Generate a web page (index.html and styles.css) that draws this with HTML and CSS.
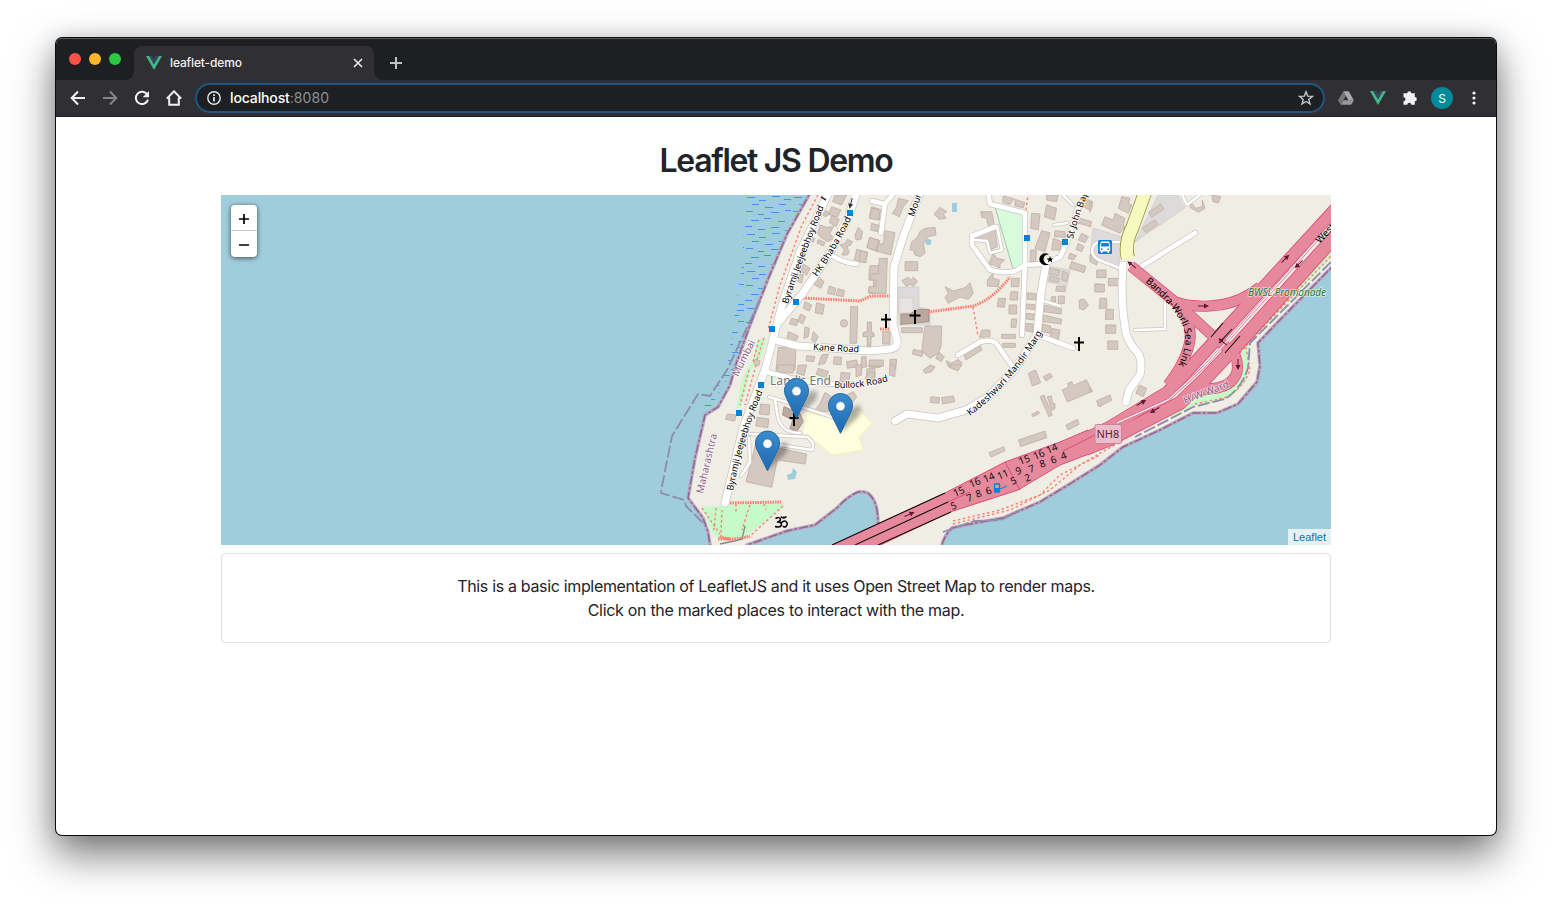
FILE: index.html
```html
<!DOCTYPE html>
<html lang="en">
<head>
<meta charset="utf-8">
<title>leaflet-demo</title>
<link rel="stylesheet" href="styles.css">
</head>
<body>
<div class="window">
  <div class="tabstrip">
    <div class="lights"><i class="red"></i><i class="amber"></i><i class="green"></i></div>
    <div class="tab">
      <svg class="vue" width="16" height="14" viewBox="0 0 16 14"><path fill="#41b883" d="M0 0h3.2L8 8.3 12.8 0H16L8 14z"/><path fill="#35495e" d="M3.2 0h3L8 3.1 9.8 0h3L8 8.3z"/></svg>
      <span class="tab-title">leaflet-demo</span>
      <svg class="close" width="10" height="10" viewBox="0 0 10 10"><path d="M1 1l8 8M9 1l-8 8" stroke="#e8eaed" stroke-width="1.6"/></svg>
    </div>
    <svg class="plus" width="12" height="12" viewBox="0 0 12 12"><path d="M6 0v12M0 6h12" stroke="#bdc1c6" stroke-width="2"/></svg>
  </div>
  <div class="toolbar">
    <div class="nav">
      <svg width="16" height="16" viewBox="0 0 16 16"><path d="M15 8H2M8 1.5L1.7 8 8 14.500" class="ic"/></svg>
      <svg width="16" height="16" viewBox="0 0 16 16"><path d="M1 8h13M8 1.500L14.300 8 8 14.500" class="ic dim"/></svg>
      <svg width="16" height="16" viewBox="0 0 16 16"><path d="M13.300 4.600A6.200 6.200 0 1 0 14 9.600" class="ic"/><path d="M15 1v6.300H8.700z" fill="#f1f1f3"/></svg>
      <svg width="16" height="16" viewBox="0 0 16 16"><path d="M.8 8.600L8 1.300l7.200 7.300M3.200 7.500v7.300h9.600V7.500" class="ic"/></svg>
    </div>
    <div class="omnibox">
      <svg width="14" height="14" viewBox="0 0 14 14"><circle cx="7" cy="7" r="6.200" fill="none" stroke="#e8eaed" stroke-width="1.4"/><path d="M7 6v4.500M7 3.200v1.700" stroke="#e8eaed" stroke-width="1.700"/></svg>
      <span class="url">localhost<em>:8080</em></span>
      <svg class="star" width="16" height="16" viewBox="0 0 16 16"><path d="M8 1.800l1.700 4.300 4.700.3-3.600 3 1.200 4.600L8 11.500 4 14l1.200-4.600-3.600-3 4.700-.3z" fill="none" stroke="#c4c7cb" stroke-width="1.400"/></svg>
    </div>
    <div class="ext">
      <svg width="16" height="16" viewBox="0 0 16 16"><path fill="#777" d="M5.300 1.200L0 10.200l2.700 4.600L8 5.700z"/><path fill="#aaa" d="M5.300 1.200h5.400l5.200 9h-5.400z"/><path fill="#999" d="M5.500 10.200h10.400l-2.700 4.600H2.700z"/></svg>
      <svg width="16" height="14" viewBox="0 0 16 14"><path fill="#41b883" d="M0 0h3.200L8 8.300 12.800 0H16L8 14z"/><path fill="#35495e" d="M3.200 0h3L8 3.100 9.800 0h3L8 8.300z"/></svg>
      <svg width="16" height="16" viewBox="0 0 16 16"><path fill="#f1f1f3" d="M5.300 3.300a2 2 0 0 1 4 0h3.500v3.800a2.050 2.050 0 0 1 0 4.100v3.600H9.300a2 2 0 0 0-4 0H1.500v-3.600a2 2 0 0 0 0-4V3.300z"/></svg>
      <span class="avatar">S</span>
      <svg width="4" height="14" viewBox="0 0 4 14"><g fill="#f1f1f3"><circle cx="2" cy="2" r="1.600"/><circle cx="2" cy="7" r="1.600"/><circle cx="2" cy="12" r="1.600"/></g></svg>
    </div>
  </div>
  <main class="page">
    <h1>Leaflet JS Demo</h1>
    <div class="map">
      <svg class="tiles" width="1110" height="350" viewBox="221 195 1110 350">
        <defs>
          <pattern id="reef" width="47" height="37" patternUnits="userSpaceOnUse" patternTransform="translate(745 196)">
            <path stroke="#3d94f6" stroke-width="1" d="M2 1.500h8M14 4.500h7M27 .500h8M39 3.500h7M7 8.500h7M20 11.500h8M34 8.500h7M1 15.500h7M13 18.500h6M26 16.500h8M40 14.500h6M6 24.500h8M19 22.500h7M33 25.500h7M0 30.500h7M13 33.500h7M26 31.500h8M40 34.500h6"/>
          </pattern>
          <linearGradient id="pin" x2="0" y2="1"><stop stop-color="#3a8ccd"/><stop offset="1" stop-color="#1f69b0"/></linearGradient>
          <filter id="soft" x="-20%" y="-20%" width="140%" height="140%"><feGaussianBlur stdDeviation="2"/></filter>
          <path id="land" d="M814 185L809 195 787 234 768 279 750 325 735 367 730 385 718 407 705 415 695 458 688 498 703 518 708 532 710 545V560H740L747 545 787 531 815 525 837 508Q848 496 858 492 866 491 870 495 878 503 878 523L880 545V560H938L942 545Q944 536 952 528L970 524 1003 518 1040 502 1073 482 1100 465 1123 447 1160 430 1193 413 1217 413 1238 404 1257 382 1260 366 1258 343 1277 323 1331 268 1345 254V185z"/>
          <g id="wide">
            <path d="M830 190L800 252 782 305 765 370 743 428 725 503"/>
            <path d="M858 190L847 220 830 253 803 293 779 322"/>
            <path d="M921 190L903 237 894 267 893 325 897 340Q898 348 890 349L870 351 830 348 798 346 779 341"/>
            <path d="M1046 264L1041 293 1037 335 1015 369 988 397 966 410 938 418 907 414 895 421"/>
            <path d="M1123 265Q1120 300 1126 333 1129 344 1138 353 1143 362 1140 375L1129 390 1126 402"/>
          </g>
          <g id="mid">
            <path d="M872 201L885 204 894 193M885 204L881 233"/>
            <path d="M988 190L990 204 1025 213V263L1022 335"/>
            <path d="M995 227L972 236 972 245 990 270Q1005 274 1015 271L1025 265 1043 264 1060 257 1067 243 1077 210 1090 190"/>
            <path d="M1037 335L1073 348M958 355L980 342Q991 339 996 343L1012 366"/>
            <path d="M830 253Q838 262 857 264M767 372L790 378 815 383 835 384M1142 266L1195 233"/>
          </g>
          <g id="thin">
            <path d="M769 397L793 404 832 417 837 420M974 240L987 241 990 253 1002 250 997 226M1041 300L1060 306M1054 225L1067 223M1063 195L1073 205"/>
            <path d="M1165 300V329L1135 330M1122 242H1100Q1093 243 1092 250 1092 256 1099 260L1122 269M1180 190L1187 205 1200 195"/>
            <path d="M775 400L778 418Q782 433 800 433M750 434L807 437Q816 443 812 450L780 445M749 438L750 462 741 476"/>
          </g>
          <g id="trunk">
            <path d="M1131 266L1179 305 1215 338 1232 352Q1239 358 1237 372 1232 388 1208 389L1185 394"/>
            <path d="M1176 302Q1190 307 1210 306 1232 305 1250 294L1260 287"/>
            <path d="M1176 302Q1192 320 1190 340 1187 360 1168 385"/>
          </g>
          <path id="upper" d="M1085 439L1110 427 1168 392 1223 332 1262 289 1340 204"/>
          <path id="lower" d="M1085 449L1110 439 1180 403 1205 379 1240 342 1340 231"/>
          <path id="arrow" d="M-5-.5H1V-2.500L6 0 1 2.500V.5H-5z"/>
          <path id="t1" d="M788 304Q801 263 828 197"/><path id="t2" d="M817 277Q838 248 854 212"/>
          <path id="t3" d="M813 350L863 352.500"/><path id="t4" d="M834 387.500Q858 390 892 380"/>
          <path id="t5" d="M733 491Q742 440 766 384"/><path id="t6" d="M703 494L719 426"/><path id="t7" d="M738 377L760 333"/>
          <path id="t8" d="M914 217L928 175"/><path id="t9" d="M970 416Q1015 382 1048 323"/><path id="t10" d="M1073 239Q1077 220 1093 180"/>
          <path id="t11" d="M1145 282Q1177 308 1184 330 1189 346 1176 369"/><path id="t12" d="M1185 404L1235 385"/><path id="t13" d="M1320 244L1350 211"/>
        </defs>
        <path fill="#a0cddb" d="M221 195h1110v350H221z"/>
        <path fill="url(#reef)" d="M746 195H810L732 372 707 412 703 408 727 370 733 325 742 265z"/>
        <use href="#land" class="land"/>
        <use href="#land" class="coast"/><use href="#land" class="coast-dash"/>
        <path class="border" d="M760 300L727 370 710 396 698 394 672 436 662 486 661 493 684 500 686 506 705 525M943 532L974 521 1001 520 1020 510"/>

        <path class="grass" d="M702 507L785 502 783 508 743 538 720 540 712 532zM757 340L767 338 762 356 751 370 741 407 736 409 742 379 753 360z"/>
        <path class="grass" d="M1331 240L1240 340 1244 362Q1242 380 1228 388L1203 394 1165 409 1171 418 1193 406 1226 400Q1242 390 1247 378L1249 343 1331 258z"/>
        <path fill="#d8fadd" stroke="#9bcba0" d="M995 207L1025 213 1024 264 1013 269z"/>
        <g class="grey">
          <path d="M898 287h21v20l11 3v15h-31zM1158 195h20l7 13-50 34zM1093 228l30 9-5 33-28-12zM1048 266l22 4-3 16-20-4z"/>
          <path fill="#e8e2e2" d="M899 298h14v15h-14z"/>
        </g>
        <path class="yellow" d="M807 413L833 418 850 415 858 409 872 423 859 437 863 450 832 455 820 445 803 432z"/>
        <g fill="#a0cddb"><path d="M952 203h5v9h-5zM793 468l4 4-2 7-7 1-1-5 5-2z"/><circle cx="928.300" cy="242" r="3"/></g>

        <g class="bld">
          <g transform="translate(640 190) scale(.33333)"><path d="M585 15H620L605 45 578 35zM575 50l28 10-11 22-27-10zM545 72l15-10 10 10-14 8zM575 78l23 10-10 22-20-12zM540 105l20 7 20-2-10 20 10 15-18 10-22-15-7-10zM510 142l15 3-5 12-12-5zM535 148l20 10-5 10-19-9zM695 50l25 8v32l-32-8zM655 112l13 13-5 23-15 2-3-15zM700 102l16 4-4 16-18-4zM690 142l30 10-8 33-32-13zM650 178l33 9-6 31-34-8zM600 165l15-5 7-12 16 7-6 10-12 5 8 15-6 10h-17l8-15zM490 222l20 13-10 20-17-10zM470 250l20 5-5 25-20-10zM530 255l22 20-9 20-19-10zM568 288l20 7-5 20-21-5zM595 296l19 6-4 18-22-4zM530 338l23 7-5 28-23-5zM495 335l20 10-7 18-18-8zM482 372l15 8-9 22-15-10zM455 385l20 5-5 17-22-5zM445 425l30 13-5 12-30 2zM495 410l13 5-3 25-13 5zM520 425l15 15-10 18-10-8zM632 350h21l-3 110h-20zM682 397h13l-2 28 9 5v10h-10v30h-10v-30h-13l1-12 13-3zM690 227h30v83h-33v-20h13v-20h-13v-20zM415 472h53l-3 68h-57zM500 497l25 3-5 15-22-3zM545 495l20-3-10 28-20 5zM583 500l22 2-2 23-23-3zM620 515l30-5 5 20-33 5zM665 500h13l2 30-18 5zM690 515h28v17h-28zM345 508l16 5-5 15-14-5z"/><circle cx="612" cy="400" r="11"/></g>
          <g transform="translate(640 365) scale(.33333)"><path d="M415 0h50l-7 25-48-5zM475 0h25l-8 32-22-7zM535 10l30 10-7 18-30-10zM603 22l28 3-6 30-25-5zM648 0h17v30l-17 5zM680 12l25-2v28l-25-3zM362 117l28 3-3 30-29-3zM352 157l35 5-4 26-36-5zM262 147l26 3-4 18-27-5zM555 82l20 13 25 5 40-20 10 15-10 15-80 30-35-5 15-20zM350 225l62 10 6 15 82 17-5 30-83-12-17 82-77-17z"/><path class="dark" d="M432 125l48 20 10 25-20 30-20-10 8-25-30-15z"/></g>
          <g transform="translate(860 190) scale(.33333)"><path d="M35 55l27 5-7 30-27-5zM115 25l30 7-15 18-12 30-21-10 13-20zM240 52l20 13-10 7 8 13-20 3-16-16zM35 100l22 8-5 17-20-5zM75 122l30 6-13 67-44-12 4-18 18-5zM28 143l27 7-5 32-28-10zM0 183l22 5-5 30-17-3zM58 205h24l-4 107-53-4 3-18h20v-20H30l5-18h20zM135 215h38v27h-38zM195 115l30-3 3 23-23 5-15 20 5 30-15 10-15-5-5-15h-10l5-25 15-10 10-20zM125 272l20-10 7 8 8-8 13 12-13 16-10-8-10 8zM255 290l25 13 35-10 15-15 10 32-15 18-25-7-35 19-10-18 10-12zM125 413h62v15h-62zM195 408h50l-2 62-8 20-25 15-25-20 5-45zM160 478l30 7-5 15-28-8zM237 487l16 13-10 15-16-10zM258 512l17 8 20-12 12 12-22 20-20-10zM310 490l50-24 6 14-48 30zM365 420h25v20l-32 2zM425 433h41v12h-41zM428 460h38v12h-38zM400 248l-2 17 20 5-3 20-33-2v-18zM455 265h23l-2 25h-23zM453 305h20v25h-23zM415 325h22l-4 27-21-2zM447 345h23v27h-23zM455 387h15l-2 25h-15zM68 425h22v37H68zM22 397h12l-1 28 7 5v10h-7l-1 28H22v-28l-12-2v-10l12-3zM28 510h42v18H28zM90 508h20l-3 32H90zM362 65h33l8 40-18 5-5-25-15-3zM345 140l60-20 7 50-20 10-12-30-30 2zM400 190l10 15 24 5-14 12v13l-20-10-15-3zM430 18l32 8-12 18-22-7zM465 28l30 10-5 15-25-5zM515 70l25 2-5 48-23-5zM545 122l25 6-15 57-30-10 5-15zM560 45l30 10-7 35-30-10zM560 15h35l-5 20-30-5zM585 122l30 3 2 17-34-2zM580 145l25 10-5 25h-25zM512 180h18l-3 35h-17zM675 25l23 10-8 25-22-10zM645 80l50 15-3 15-42-12zM665 130l20 10-10 18-20-8zM655 160l17 10-7 15-17-7zM630 190l20 7-10 13-15-5zM635 215l43 15-6 18-44-13zM690 195l25 10-5 20-20-10zM570 235l30 5-5 18-30-8zM608 243l18 8-6 24-15-5zM570 257l28 8-3 12-28-5zM590 288l28 2-3 15-28-2zM595 318h18v22h-18zM575 320h12v15h-14zM555 345l50 13-2 14-53-7zM550 375l55 13-2 14-55-7zM575 415l25 5-5 30-25-5zM548 402l24 6-2 22-24-5zM503 308l27 4-3 18-25-2zM500 342l25 2-2 15-24-3zM500 370l23 2-2 18-23-3zM497 400l23 2-2 25-21-5zM658 330l14-3 13 18-13 15-14-5zM705 282h15v23h-15z"/><path class="dark" d="M123 372h27l25-14h32v37l-84 8z"/></g>
          <g transform="translate(1090 190) scale(.33333)"><path d="M95 20l25 5-5 15 10 5-10 25-30-15zM75 70l30 15-5 20 5 5-15 20-55-25 10-25 25 10zM212 42l10 15-37 25-9-15zM195 90l8 13-35 25-10-14zM20 240h28v23H20zM55 265h32v22H55zM15 283h28v23H15zM30 325h20v30H28zM48 358h22v30H46zM47 405h30v25H47zM53 453h30v25H53zM0 35l8 10-8 22zM305 40l12 15 20-5V30l8 25-20 12-25-15z"/><path d="M365 15l5 20 15 3 8-18z"/></g>
          <g transform="translate(860 365) scale(.33333)"><path d="M28 20l17 5-5 20-25-5zM90 0h15v35l-17-5zM25 0h40v5H25zM190 15l20-15 15 5-10 15-20 5zM265 0h40l-12 18zM213 95l26 3-2 17-26-3zM245 98l35-5 4 17-36 7zM505 25l22-10 15 38-25 10zM550 35l20-10 8 10-20 13zM607 75l18-8-2-12 13-5 3 12 40-18 18 35-75 32zM540 95l12-5 25 60-10 5zM562 95l12-2 3 20 8 3v15l-10 5zM515 148l20-10 4 7-20 10zM618 180l35-17 4 15-33 17zM475 225l80-27 5 20-78 27zM387 263l44-18 4 12-42 19zM712 110l10 0v15l-8-3z"/></g>
          <g transform="translate(1090 365) scale(.33333)"><path d="M20 107l40-17 5 16-38 19zM148 60l22 10-10 25-22-10zM0 68l6 8-6 8z"/></g>
        </g>

        <g class="foot">
          <path class="steps" d="M803 298L860 301 871 296H892M928 312L973 306Q992 300 1010 277M880 329h12"/>
          <path class="steps" d="M730 503L781 502M720 536Q730 542 750 536M718 539h12"/>
          <path d="M818 195L802 225 780 285 768 330M973 307L978 336M1026 210L1028 195M702 508L720 534M716 508L714 530M722 510L721 534M750 505L742 530M783 506L750 536M736 504v10M764 504l2 6M759 340L753 362M764 338L757 360M749 370L740 405M756 365L745 405"/>
          <path d="M953 521L1000 510 1040 495 1060 475 1100 455M953 524L1010 510 1050 490 1080 465 1135 433M1236 347L1331 243M1240 353L1331 250M1246 345L1331 256M1255 330l10-8M1246 347L1250 370Q1245 385 1228 397L1195 404"/>
        </g>
        <path d="M720 544l14-3 8-2 3-13" fill="none" stroke="#888" stroke-width="1.400"/>
        <path class="border" d="M1331 262L1250 343 1248 368Q1242 388 1225 399L1193 407 1135 437"/>

        <use href="#thin" class="thin-case"/><use href="#mid" class="mid-case"/><use href="#wide" class="wide-case"/>
        <use href="#thin" class="thin-fill"/><use href="#mid" class="mid-fill"/><use href="#wide" class="wide-fill"/>
        <use href="#trunk" class="trunk-case"/><use href="#lower" class="lower-case"/><use href="#upper" class="upper-case"/>
        <path class="span" d="M826 548L860 532 945 493 1005 462 1060 442 1088 430 1094 452 1060 465 1018 490 950 512 872 549z"/>
        <use href="#trunk" class="trunk-fill"/><use href="#lower" class="lower-fill"/><use href="#upper" class="upper-fill"/>
        <path d="M1117 423L1168 400 1205 366 1331 224" fill="none" stroke="#dc4b78" stroke-width="2.600"/>
        <path d="M1117 423L1168 400 1205 366 1331 224" fill="none" stroke="#f8eef0" stroke-width="1.600"/>
        <path d="M832 545L945 493M855 545L948 502M878 545L951 512M1211 337L1223 323M1219 343L1232 329M1225 353L1240 336" fill="none" stroke="#111" stroke-width="1.100"/>
        <path d="M1005 462L1020 490M948 502L970 492M1063 451L1095 435" fill="none" stroke="#dc4b78"/>
        <path class="yroad-case" d="M1147 187L1133 226Q1124 244 1128 258"/><path class="yroad" d="M1147 187L1133 226Q1124 244 1128 259"/>
        <g class="arrows">
          <use href="#arrow" transform="translate(909 514.500) rotate(-24)"/>
          <use href="#arrow" transform="translate(1141 403) rotate(-30)"/>
          <use href="#arrow" transform="translate(1155 410) rotate(150)"/>
          <use href="#arrow" transform="translate(1203 306)"/>
          <use href="#arrow" transform="translate(1285 259) rotate(-45)"/>
          <use href="#arrow" transform="translate(1299 264) rotate(135)"/>
          <use href="#arrow" transform="translate(1132 265) rotate(220)"/>
          <use href="#arrow" transform="translate(1223 342) rotate(220)"/>
          <use href="#arrow" transform="translate(1238 364) rotate(90)"/>
          <use href="#arrow" transform="translate(851 203) rotate(105)" fill="#333"/>
          <path d="M821 197l5 3" stroke="#333" stroke-width="1.500"/>
        </g>
        <path fill="#0084da" d="M847 210h6v6h-6zM793 299h6v6h-6zM769 326h6v6h-6zM758 382h6v6h-6zM736 410h6v6h-6zM1024 235h6v6h-6zM1062 239h6v6h-6z"/>
        <g><rect x="1098" y="240" width="14" height="14" rx="1.500" fill="#0084da"/><path fill="#fff" d="M1101 241.500h8l1.200 4v6h-1.200v1.500h-1.500v-1.500h-5v1.500h-1.500v-1.500h-1.200v-6z"/><path fill="#0084da" d="M1101.500 243h7l.8 3.500h-8.600zM1101 248.500h1.500v1.500h-1.500zM1107.500 248.500h1.500v1.500h-1.500z"/></g>
        <path d="M1000 489l7-3" stroke="#0084da"/><path d="M994.500 484h5v8h-5z" fill="#e892a2" stroke="#0084da" stroke-width="1.300"/><path d="M994 488h6v4h-6z" fill="#0084da"/>
        <g fill="none" stroke="#000" stroke-width="2">
          <path d="M886 314v14M881 319.500h10M915 310v14M909.500 315.500h11M1079 337v14M1074 342.500h10M794 413v13M789.500 418h9"/>
          <path d="M775.500 518.500q4-2 5 .5 0 2.500-3 3 4-.3 4 3-1 3-6.500 1.500M781 523q3-3 5-1.500 2.500 2 0 5-2 1-3-.5M781 516.500q2.500 3 5.500 0" stroke-width="1.500"/>
        </g>
        <path d="M1049 254.500a6 6 0 1 0 0 9.500 4.800 4.800 0 1 1 0-9.500zM1050 256l1 2.500h2.500l-2 1.500.8 2.500-2.300-1.500-2.200 1.500.8-2.500-2-1.500h2.500z"/><circle cx="784" cy="517" r=".8"/>

        <g class="road-name">
          <text textLength="104"><textPath href="#t1">Byramji Jeejeebhoy Road</textPath></text>
          <text textLength="68"><textPath href="#t2">HK Bhaba Road</textPath></text>
          <text textLength="46"><textPath href="#t3">Kane Road</textPath></text>
          <text textLength="55"><textPath href="#t4">Bullock Road</textPath></text>
          <text textLength="104"><textPath href="#t5">Byramji Jeejeebhoy Road</textPath></text>
          <text><textPath href="#t8">Mount</textPath></text>
          <text textLength="111"><textPath href="#t9">Kadeshwari Mandir Marg</textPath></text>
          <text><textPath href="#t10">St John Bap</textPath></text>
          <text class="plain" textLength="99"><textPath href="#t11">Bandra-Worli Sea Link</textPath></text>
          <text class="plain"><textPath href="#t13">West</textPath></text>
        </g>
        <g class="admin">
          <text textLength="61"><textPath href="#t6">Maharashtra</textPath></text>
          <text><textPath href="#t7">Mumbai</textPath></text>
          <text><textPath href="#t12">H/W Ward</textPath></text>
        </g>
        <text class="place" x="770" y="385" textLength="61">Land's End</text>
        <text class="promenade" x="1248" y="295.500" textLength="78">BWSL Promonade</text>
        <g class="gates">
          <text transform="translate(955 497) rotate(-24)">15</text><text transform="translate(971 488) rotate(-24)">16</text><text transform="translate(985 483) rotate(-24)">14</text><text transform="translate(999 480) rotate(-24)">11</text>
          <text transform="translate(952 510) rotate(-20)">5</text><text transform="translate(968 502) rotate(-20)">7</text><text transform="translate(977 498) rotate(-20)">8</text><text transform="translate(987 495) rotate(-20)">6</text>
          <text transform="translate(1020 465) rotate(-20)">15</text><text transform="translate(1035 460) rotate(-24)">16</text><text transform="translate(1048 454) rotate(-24)">14</text>
          <text transform="translate(1017 475) rotate(-20)">9</text><text transform="translate(1030 473) rotate(-20)">7</text><text transform="translate(1041 468) rotate(-20)">8</text><text transform="translate(1052 464) rotate(-20)">6</text><text transform="translate(1062 460) rotate(-20)">4</text>
          <text transform="translate(1012 485) rotate(-20)">5</text><text transform="translate(1026 482) rotate(-20)">2</text>
        </g>
        <rect x="1095" y="424.500" width="26.500" height="19" rx="1.500" fill="#eabfcb" stroke="#cf8096"/>
        <text class="shield" x="1096.500" y="438">NH8</text>

        <g opacity=".3" filter="url(#soft)"><path d="M797 418l4-18 12-10q7 2 2 11zM841 433l4-18 12-10q7 2 2 11zM768 470l4-18 12-10q7 2 2 11z"/></g>
        <g id="marker" transform="translate(784 378)">
          <path fill="url(#pin)" stroke="#2468a5" d="M12.500.6C5.800.6.5 6 .5 12.500c0 3 1 5.500 2.200 8L12.500 40.300l9.800-19.800c1.200-2.500 2.200-5 2.200-8C24.500 6 19.200.6 12.500.6z"/><circle cx="12.500" cy="13.200" r="4.600" fill="#fff" stroke="#2a6eac" stroke-width=".6"/>
        </g>
        <use href="#marker" x="44" y="15"/><use href="#marker" x="-29" y="52.500"/>
      </svg>
      <div class="zoom"><button aria-label="Zoom in"><svg width="12" height="12" viewBox="0 0 12 12"><path d="M6 1v10M1 6h10" stroke="#000" stroke-width="1.700"/></svg></button><button aria-label="Zoom out"><svg width="12" height="12" viewBox="0 0 12 12"><path d="M1 6h10" stroke="#000" stroke-width="1.700"/></svg></button></div>
      <a class="credit">Leaflet</a>
    </div>
    <div class="card"><p><span class="line-a">This is a basic implementation of LeafletJS and it uses Open Street Map to render maps.</span><br><span class="line-b">Click on the marked places to interact with the map.</span></p></div>
  </main>
</div>
</body>
</html>
```
FILE: styles.css
```css
* { box-sizing: border-box; }
body { margin: 0; height: 909px; overflow: hidden; background: #fff; font-family: Inter, "Liberation Sans", sans-serif; color: #212529; display: flex; padding: 38px 0 0 56px; }
.window { width: 1440px; height: 797px; border-radius: 6px; overflow: hidden; background: #fff; box-shadow: 0 0 0 1px #0c0c0e, 0 18px 40px 2px rgba(0,0,0,.52), 0 0 20px rgba(0,0,0,.12); }
.tabstrip { height: 42px; background: #1e1f23; display: flex; border-top: 1px solid #55565a; }
.lights { display: flex; gap: 8px; padding: 14px 13px 0; width: 78px; }
.lights i { width: 12px; height: 12px; flex: none; border-radius: 50%; }
.red { background: #ff5148; }
.amber { background: #fdb628; }
.green { background: #26c940; }
.tab { position: relative; width: 240px; height: 34px; margin-top: 7px; border-radius: 8px 8px 0 0; background: #302f34; display: flex; align-items: center; padding: 0 11px 0 12px; font-size: 12px; font-weight: 500; color: #f1f1f3; }
.tab::before, .tab::after { content: ""; position: absolute; bottom: 0; width: 8px; height: 8px; }
.tab::before { left: -8px; background: radial-gradient(circle at 0 0, #1e1f23 7.5px, #302f34 8px); }
.tab::after { right: -8px; background: radial-gradient(circle at 100% 0, #1e1f23 7.5px, #302f34 8px); }
.tab-title { margin-left: 8px; padding-bottom: 2px; letter-spacing: -.13px; flex: 1; }
.plus { margin: 18px 0 0 16px; }
.toolbar { height: 37px; background: #302f34; border-bottom: 1px solid #202024; display: flex; align-items: center; }
.nav { display: flex; gap: 16px; padding-left: 14px; width: 139px; }
.ic { fill: none; stroke: #f1f1f3; stroke-width: 2; }
.dim { stroke: #85858a; }
.omnibox { width: 1130px; height: 30px; border: 2px solid #205781; border-radius: 15px; background: #1e1f23; display: flex; align-items: center; padding: 0 9px 0 10px; }
.url { margin-left: 9px; padding-bottom: 1px; font-size: 14px; font-weight: 500; color: #fff; letter-spacing: -.13px; flex: 1; }
.url em { font-style: normal; font-weight: 400; color: #8d9094; letter-spacing: .1px; }
.ext { display: flex; align-items: center; padding-left: 13px; gap: 16px; }
.ext .avatar { width: 22px; height: 22px; margin: 0 -3px; border-radius: 50%; background: #028a9b; color: #fff; font-size: 12px; display: grid; place-items: center; }
.ext svg:last-child { margin-left: 6px; }
.page { width: 1110px; margin: 0 auto; padding-top: 25px; text-align: center; }
h1 { margin: 0 0 15px; font-size: 32px; line-height: 38px; font-weight: 600; letter-spacing: -1.3px; }
.map { position: relative; height: 350px; overflow: hidden; }
.tiles { display: block; }
.tiles path { stroke-linejoin: round; }
.land { fill: #f0ede5; }
.coast { fill: none; stroke: #b9a6bf; stroke-width: 3.5; }
.coast-dash { fill: none; stroke: #8d6690; stroke-width: 1.4; stroke-dasharray: 9 2 3 2; }
.border { fill: none; stroke: #8f8bae; stroke-width: 1.8; stroke-dasharray: 12 3; }
.grass { fill: #c6fac9; }
.grey { fill: #dcdadb; stroke: #cfc9c6; stroke-width: .6; }
.yellow { fill: #ffffe0; stroke: #f7f5b4; }
.bld path, .bld circle { fill: #d4c9c0; stroke: #c2b1a4; stroke-width: 2.6; }
.bld .dark { fill: #baa99c; stroke: #a18d7f; }
.foot path { fill: none; stroke: #fa8072; stroke-width: 1.4; stroke-dasharray: 2.5 2.5; }
.foot .steps { stroke-width: 3; stroke-dasharray: 1.6 .9; }
.thin-case, .mid-case, .wide-case { fill: none; stroke: #c9c5c0; stroke-linecap: round; }
.thin-case { stroke-width: 4; }
.mid-case { stroke-width: 6; }
.wide-case { stroke-width: 8.6; }
.thin-fill, .mid-fill, .wide-fill { fill: none; stroke: #fff; stroke-linecap: round; }
.thin-fill { stroke-width: 2.6; }
.mid-fill { stroke-width: 4.6; }
.wide-fill { stroke-width: 7.2; }
.trunk-case { fill: none; stroke: #dc4b78; stroke-width: 11; }
.trunk-fill { fill: none; stroke: #e6899c; stroke-width: 9.6; }
.span { fill: #e6899c; stroke: #dc4b78; }
.lower-case { fill: none; stroke: #dc4b78; stroke-width: 14; }
.upper-case { fill: none; stroke: #dc4b78; stroke-width: 13; }
.lower-fill { fill: none; stroke: #e6899c; stroke-width: 12.4; }
.upper-fill { fill: none; stroke: #e6899c; stroke-width: 11.4; }
.yroad-case { fill: none; stroke: #8f963c; stroke-width: 14; }
.yroad { fill: none; stroke: #f7fabf; stroke-width: 12.4; }
.arrows { fill: #601535; }
.tiles text { font-family: "Noto Sans", "Open Sans", sans-serif; }
.road-name { font-size: 9.2px; fill: #000; stroke: #fff; stroke-width: 1.4px; }
.road-name text { paint-order: stroke; }
.road-name .plain { stroke: none; font-size: 9.8px; }
.admin { font-size: 10px; fill: #8d618b; stroke: rgba(255,255,255,.65); stroke-width: 1.5px; }
.admin text { paint-order: stroke; }
.place { font-size: 12px; fill: #777; paint-order: stroke; stroke: rgba(255,255,255,.6); stroke-width: 2px; }
.promenade { font-size: 10px; font-style: italic; fill: #267d2c; paint-order: stroke; stroke: rgba(255,255,255,.6); stroke-width: 1.5px; }
.gates { font-size: 10px; fill: #111; }
.shield { font-size: 11px; fill: #60203d; }
.zoom { position: absolute; left: 10px; top: 10px; width: 26px; border-radius: 4px; background: #fff; box-shadow: 0 1px 5px rgba(0,0,0,.65); }
.zoom button { display: grid; place-items: center; width: 26px; height: 26px; padding: 1px 0 0; border: 0; background: none; }
.zoom button:first-child { padding-top: 2px; border-bottom: 1px solid #ccc; }
.credit { position: absolute; right: 0; bottom: 0; padding: 0 5px; height: 16px; line-height: 17px; font-family: "Liberation Sans", Arial, sans-serif; font-size: 11px; color: #0078a8; background: rgba(255,255,255,.7); }
.card { margin-top: 8px; height: 90px; border: 1px solid #dfdfdf; border-radius: 4px; padding: 20px; }
.card p { margin: 0; font-size: 16px; line-height: 24px; white-space: nowrap; }
.line-a { letter-spacing: -.334px; }
.line-b { letter-spacing: -.3px; }
```
